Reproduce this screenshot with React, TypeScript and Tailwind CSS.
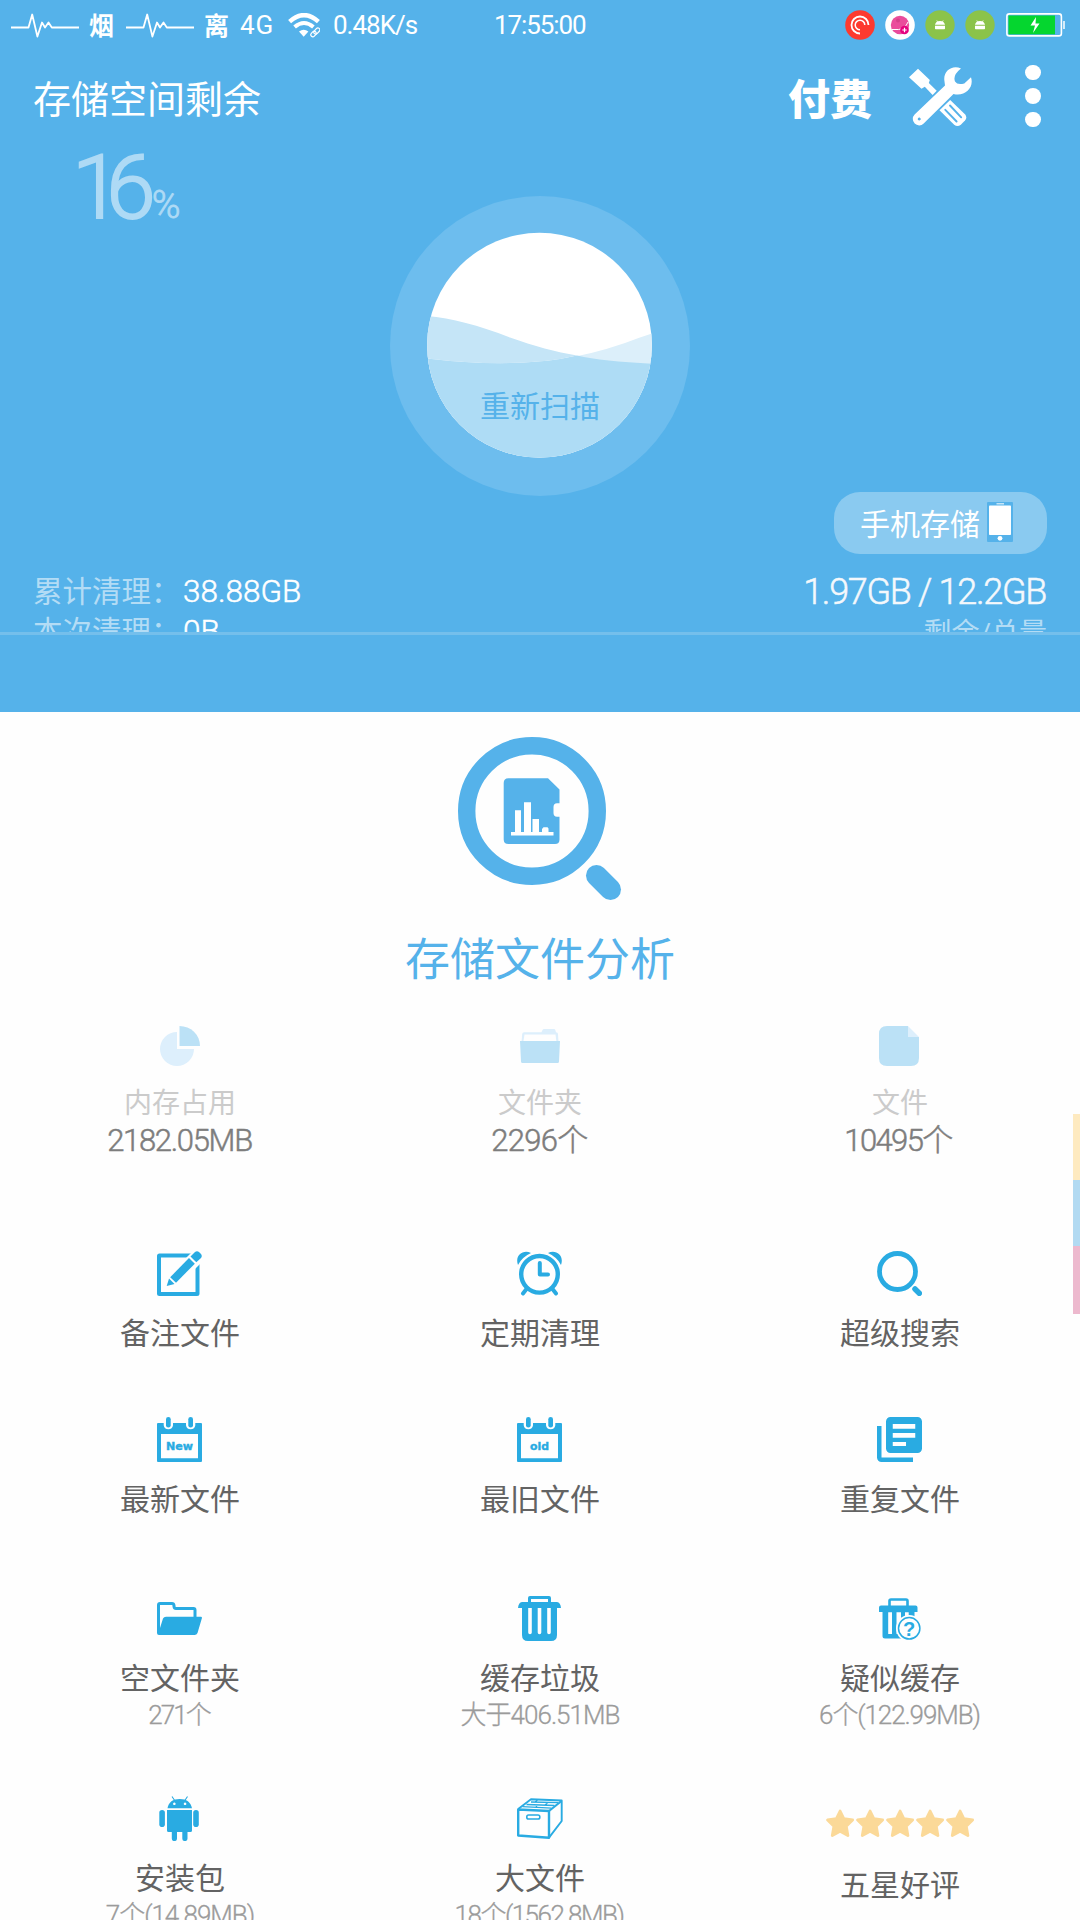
import type { ReactNode } from 'react';

type Tile = {
    icon: ReactNode;
    label: string;
    sub?: string;
    subClass?: string;
};

/* ---------- status bar ---------- */

function Pulse() {
    return (
        <svg width="68" height="25" viewBox="0 0 68 25" fill="none" stroke="#fff" strokeWidth="1.8" strokeLinejoin="round">
            <path d="M0 14.5H17.5L21.2 1.5L26.4 23.5L31 9.5L34 14.5L37.5 9.5L40.8 14.5H68" />
        </svg>
    );
}

function Wifi() {
    return (
        <svg width="32" height="25" viewBox="0 0 32 25" fill="none" stroke="#fff">
            <path d="M1.6 8.6Q16-4.4 30.4 8.6" strokeWidth="4.4" />
            <path d="M6.6 14Q16 6 25.4 14" strokeWidth="4" />
            <path d="M11 18.4Q15.7 15 20.4 18.4L15.7 23.8Z" fill="#fff" stroke="none" />
            <rect x="25.5" y="16" width="4" height="7" rx="2" transform="rotate(42 27.5 19.5) translate(0 -2)" strokeWidth="1.2" />
            <rect x="23.5" y="18" width="4" height="6" rx="2" transform="rotate(42 25.5 21)" strokeWidth="1.2" />
        </svg>
    );
}

function AndroidBadge() {
    return (
        <svg width="30" height="30" viewBox="0 0 30 30">
            <circle cx="15" cy="15" r="14.7" fill="#8bc34a" />
            <path d="M12.6 12L11.8 10.4M17.4 12L18.2 10.4" stroke="#fff" strokeWidth="0.7" />
            <path d="M10 14.7C10.6 12.4 12 11 15 11S19.4 12.4 20 14.7ZM10 15.7H20V18.5Q20 19.2 19.3 19.2H10.7Q10 19.2 10 18.5Z" fill="#fff" />
        </svg>
    );
}

function StatusBar() {
    return (
        <div className="flex h-[50px] items-center pl-[11px] text-[26px] leading-none text-white">
            <Pulse />
            <span className="mt-[2px] ml-[10px] w-[28px] text-[25px] font-bold">烟</span>
            <span className="ml-[9px]"><Pulse /></span>
            <span className="mt-[2px] ml-[10px] w-[28px] text-[25px] font-bold">离</span>
            <span className="ml-[8px] w-[48px] tracking-[0.8px]">4G</span>
            <Wifi />
            <span className="ml-[13px] w-[161px] tracking-[-1px]">0.48K/s</span>
            <span className="w-[351px] tracking-[-1.1px]">17:55:00</span>
            <div className="flex items-center gap-[10px]">
                <svg width="30" height="30" viewBox="0 0 30 30" fill="none">
                    <circle cx="15" cy="15" r="14.8" fill="#fd3a2f" />
                    <path d="M15 23.5A8.5 8.5 0 1 1 23.5 15" stroke="#fff" strokeWidth="1.8" />
                    <path d="M15 19.8A4.8 4.8 0 1 1 19.8 15" stroke="#fff" strokeWidth="1.5" />
                </svg>
                <svg width="30" height="30" viewBox="0 0 30 30">
                    <circle cx="15" cy="15" r="14.8" fill="#fff" />
                    <circle cx="15" cy="15" r="9.2" fill="#ea4c9c" />
                    <circle cx="13" cy="10.5" r="2" fill="#d6418b" />
                    <path d="M7 19.5H13.5Q20 19 23 12" stroke="#fff" strokeWidth="1" fill="none" />
                    <circle cx="19.5" cy="20" r="4.3" fill="#e6007e" />
                    <path d="M19.5 17.8V22.2M17.3 20H21.7" stroke="#fff" strokeWidth="1.2" />
                </svg>
                <AndroidBadge />
                <AndroidBadge />
            </div>
            <svg className="ml-[11px]" width="60" height="24" viewBox="0 0 60 24">
                <rect x="0.9" y="0.9" width="54.5" height="22" rx="2.5" fill="none" stroke="#fff" strokeWidth="1.6" />
                <rect x="2.5" y="2.5" width="46.5" height="18.8" fill="#05d62f" />
                <path d="M30 4L24.5 12.5H29L27 20L33.5 10.5H29.5Z" fill="#fff" />
                <path d="M58 8V16" stroke="#fff" strokeWidth="1.5" />
            </svg>
        </div>
    );
}

/* ---------- header ---------- */

function Tools() {
    return (
        <svg width="64" height="60" viewBox="0 0 64 60">
            <path d="M0 10.3L9 1.7L20.8 13L19.8 16L27.7 23.7L23.6 28L15.8 19.8L12.5 21.7Z" fill="#fff" />
            <path fillRule="evenodd" d="M52 1.4C43-2.5 34.5 4 35.3 13L36 18.5L5.6 47.6A6.3 6.3 0 1 0 14.7 56.5L44.5 27C55.5 30 65.5 21 62 10.2L55.3 16.4Q48.5 18.5 46 14.5Q43.5 8 52 1.4ZM10.3 50.6A1.5 1.5 0 1 1 10.2 50.6Z" fill="#fff" />
            <path d="M41.2 33L56.2 47.5Q58.5 50.5 56 53.5L51.8 57.8Q48.5 60.3 45.2 57.8L30.5 43.3Z" fill="#fff" />
            <path d="M41 38.5L52.2 50.3M36.3 42.8L47.6 54.5" stroke="#55b2ea" strokeWidth="1.9" strokeLinecap="round" />
        </svg>
    );
}

function Gauge() {
    return (
        <svg width="300" height="300" viewBox="390 196 300 300">
            <defs>
                <clipPath id="tank"><circle cx="539.5" cy="345.2" r="112.4" /></clipPath>
            </defs>
            <circle cx="540" cy="346" r="150" fill="#6dbdee" />
            <g clipPath="url(#tank)">
                <rect x="420" y="230" width="240" height="240" fill="#fff" />
                <path d="M420 357.5Q500 368 560 359Q590 355 625 343Q640 337 660 331V470H420Z" fill="#dceffa" />
                <path d="M420 357.5Q500 368 560 359L577 355.5Q605 362 660 364V470H420Z" fill="#aedcf5" />
                <path d="M420 315.5C447 317 475 324 510 337.5C534 346 556 352 577 355.5L560 359Q500 368 420 357.5Z" fill="#c5e5f7" />
            </g>
        </svg>
    );
}

function Header() {
    return (
        <header className="h-[712px] bg-[#55b2ea] text-white">
            <StatusBar />
            <div className="flex h-[98px] items-center pl-[33px]">
                <h1 className="mt-[2px] w-[755px] text-[38px] leading-none">存储空间剩余</h1>
                <span className="mt-[4px] w-[121px] text-[42px] leading-none font-black">付费</span>
                <div className="-mt-[4px]"><Tools /></div>
                <div className="-mt-[6px] ml-[52px] flex flex-col gap-[8px]">
                    <span className="size-[15.5px] rounded-full bg-white" />
                    <span className="size-[15.5px] rounded-full bg-white" />
                    <span className="size-[15.5px] rounded-full bg-white" />
                </div>
            </div>

            <div className="flex h-[344px]">
                <div className="flex h-[80px] w-[390px] items-baseline pt-[2px] pl-[72px] font-light text-[#aedaf5]">
                    <span className="text-[89px] leading-[76px] tracking-[-15px] [-webkit-text-stroke:2px]">16</span>
                    <span className="ml-[11px] text-[39px] leading-none [-webkit-text-stroke:0.8px]">%</span>
                </div>
                <div className="relative mt-[48px] size-[300px]">
                    <Gauge />
                    <span className="absolute inset-x-0 top-[196px] text-center text-[30px] leading-[30px] text-[#55b2ea]">重新扫描</span>
                </div>
            </div>

            <div className="flex justify-end pr-[33px]">
                <button className="flex h-[62px] w-[213px] items-center gap-[7px] rounded-[26px] bg-[#8acaf0] pl-[26px] text-[30px] leading-none">
                    <span className="mt-[3px]">手机存储</span>
                    <svg className="-mt-[2px]" width="26" height="40" viewBox="0 0 26 40">
                        <rect width="26" height="40" rx="1" fill="#55b2ea" />
                        <rect x="9.5" y="1" width="7.5" height="1.5" fill="#c5e5f7" />
                        <rect x="2" y="3.5" width="22" height="29.5" rx="0.8" fill="#fff" />
                        <circle cx="13" cy="36.3" r="2.4" fill="#fff" />
                    </svg>
                </button>
            </div>

            <div className="flex h-[78px] justify-between overflow-hidden pt-[18px] pr-[33px] pl-[33px]">
                <div className="flex flex-col text-[29.5px] leading-[40px]">
                    <p className="flex"><span className="w-[150px] text-[#b3dcf5]">累计清理：</span><span className="text-[31.5px] font-light [-webkit-text-stroke:0.5px]">38.88GB</span></p>
                    <p className="flex"><span className="w-[150px] text-[#b3dcf5]">本次清理：</span><span className="text-[31.5px] font-light [-webkit-text-stroke:0.5px]">0B</span></p>
                </div>
                <div className="flex flex-col items-end text-[#f4f8fc]">
                    <p className="pr-px text-[36px] leading-[41px] font-light tracking-[-1.3px] [-webkit-text-stroke:0.5px]">1.97GB / 12.2GB</p>
                    <p className="text-[28px] leading-[41px] text-[#b3dcf5]">剩余/总量</p>
                </div>
            </div>
            <div className="h-[3px] bg-[#74bfec]" />
        </header>
    );
}

/* ---------- analysis ---------- */

function AnalysisIcon() {
    return (
        <svg width="164" height="164" viewBox="0 0 164 164">
            <circle cx="74" cy="74" r="65.3" fill="none" stroke="#55b2ea" strokeWidth="17.4" />
            <path d="M50.5 41.3H90L101.5 52.5V66.3H99Q95.5 66.5 95.5 70V76Q95.5 79.5 99 79.7H101.5V102.5Q101.5 107 97 107H50.5Q45.7 107 45.7 102.5V46Q45.7 41.3 50.5 41.3Z" fill="#55b2ea" />
            <path d="M57 73.3H63V95H66V65.3H73V95H74.5V82H81V95H84V92L85.5 90.3H89.5L90.5 91.5V95H95.5V98.5H53V95H57Z" fill="#fff" />
            <path d="M138.5 138.5L152.5 152.5" stroke="#55b2ea" strokeWidth="21" strokeLinecap="round" />
        </svg>
    );
}

const stats = [
    {
        label: '内存占用',
        value: '2182.05MB',
        valueClass: 'tracking-[-1.3px] pr-[1px]',
        icon: (
            <svg width="40" height="40" viewBox="0 0 40 40">
                <path d="M17 6V23H34A17 17 0 1 1 17 6Z" fill="#ddeffc" />
                <path d="M19.5 0A20.5 20 0 0 1 40 20H19.5Z" fill="#bbe1f6" />
            </svg>
        ),
    },
    {
        label: '文件夹',
        value: '2296个',
        valueClass: 'tracking-[-0.7px] pr-[1px]',
        icon: (
            <svg width="40" height="40" viewBox="0 0 40 40">
                <path d="M1.5 16L2.2 8Q2.3 6.2 4 6.2H21.5L22.5 4Q23 3 24 3H34Q35 3 35.3 4L36 6.2Q38 6.5 38 8L38.5 16Z" fill="#ddeffc" />
                <path d="M4.5 8.5H35.5L36.3 15H3.5Z" fill="#fefefe" />
                <path d="M0 15H40L39 35.5Q39 37 37.5 37H2.5Q1 37 1 35.5Z" fill="#bbe1f6" />
            </svg>
        ),
    },
    {
        label: '文件',
        value: '10495个',
        valueClass: 'tracking-[-1.6px] pr-[4px]',
        icon: (
            <svg className="mr-[2px]" width="40" height="40" viewBox="0 0 40 40">
                <path d="M8 0H29V11H40V32Q40 40 32 40H8Q0 40 0 32V8Q0 0 8 0Z" fill="#bbe1f6" />
                <path d="M29 0L40 11H29Z" fill="#ddeffc" />
            </svg>
        ),
    },
];

/* ---------- tool icons ---------- */

function EditIcon() {
    return (
        <svg width="45" height="45" viewBox="0 0 45 45">
            <rect x="2" y="4.5" width="38.5" height="38.5" rx="0.5" fill="none" stroke="#29abe2" strokeWidth="4" />
            <path d="M8 37L12 24L35 1H45V11L22 34Z" fill="#fefefe" />
            <path d="M9.7 35L12 27.5L17.5 33Z" fill="#29abe2" />
            <path d="M13.2 26.2L32 7L37.8 12.7L19 31.7Z" fill="#29abe2" />
            <path d="M33.5 5.5L38 1Q40-.5 42 1L44 3Q45.5 5 44 7L39.3 11.3Z" fill="#29abe2" />
        </svg>
    );
}

function AlarmIcon() {
    return (
        <svg width="45" height="45" viewBox="0 0 45 45" fill="none" stroke="#29abe2" strokeLinecap="round" strokeLinejoin="round">
            <path d="M1 14C-2.5 4.5 6-2 14 2Q5 6 1 14ZM44 14C47.5 4.5 39-2 31 2Q40 6 44 14Z" fill="#29abe2" stroke="none" />
            <path d="M9.5 38L6 42.5M35.5 38L39 42.5" strokeWidth="4" />
            <circle cx="22.5" cy="23.3" r="18.3" strokeWidth="4.4" />
            <path d="M22.8 12V23.5H31" strokeWidth="4" />
        </svg>
    );
}

function SearchIcon() {
    return (
        <svg width="45" height="45" viewBox="0 0 45 45" fill="none" stroke="#29abe2" strokeLinecap="round">
            <circle cx="20.5" cy="20.5" r="18" strokeWidth="4.8" />
            <path d="M38 38L42.3 42.3" strokeWidth="5.5" />
        </svg>
    );
}

function CalendarIcon({ text, width }: { text: string; width: number }) {
    return (
        <svg width="45" height="45" viewBox="0 0 45 45">
            <path fillRule="evenodd" d="M1 6H6.7V8.2A4.7 4.7 0 0 0 16 8.2V6H29V8.2A4.7 4.7 0 0 0 38.3 8.2V6H44Q45 6 45 7V44Q45 45 44 45H1Q0 45 0 44V7Q0 6 1 6ZM4 17V41.3H41V17Z" fill="#29abe2" />
            <rect x="9" y="0" width="4.7" height="10.5" rx="2.3" fill="#29abe2" />
            <rect x="31.3" y="0" width="4.7" height="10.5" rx="2.3" fill="#29abe2" />
            <text
                x="22.5"
                y="33"
                textAnchor="middle"
                textLength={width}
                lengthAdjust="spacingAndGlyphs"
                stroke="#29abe2"
                strokeWidth="0.4"
                className="fill-[#29abe2] font-['DejaVu_Sans',sans-serif] text-[11px] font-bold"
            >
                {text}
            </text>
        </svg>
    );
}

function DuplicateIcon() {
    return (
        <svg width="45" height="45" viewBox="2 2 20 20" fill="#29abe2">
            <path d="M4 6H2v14c0 1.1.9 2 2 2h14v-2H4V6zm16-4H8c-1.1 0-2 .9-2 2v12c0 1.1.9 2 2 2h12c1.1 0 2-.9 2-2V4c0-1.1-.9-2-2-2zm-1 5.2H9V5.1h10v2.1zm0 4H9V9.1h10v2.1zm-4.1 3.7H9V13.1h5.9v1.8z" />
        </svg>
    );
}

function FolderOpenIcon() {
    return (
        <svg width="45" height="45" viewBox="0 -6 45 45">
            <path d="M1.5 30V3Q1.5 1.5 3 1.5H15Q16.7 1.5 17 3.5V4.5Q17.3 6.5 19 6.5H36.5Q38 6.5 38 8V16" fill="none" stroke="#29abe2" strokeWidth="3" />
            <path d="M9 14.7H44Q45.3 14.7 44.8 16.5L40.5 31Q39.7 33 37.5 33H2Q0 33 0 31V26H3L6 16.5Q6.8 14.7 9 14.7Z" fill="#29abe2" />
        </svg>
    );
}

function TrashIcon() {
    return (
        <svg width="43" height="45" viewBox="0 0 43 45">
            <path d="M11.5 7V2Q11.5 1.5 12 1.5H31Q31.5 1.5 31.5 2V7" fill="none" stroke="#29abe2" strokeWidth="3" />
            <path d="M4 6H39Q42.5 6.5 43 12H39V39Q39 45 33 45H10Q4 45 4 39V12H0Q.5 6.5 4 6Z" fill="#29abe2" />
            <path d="M10.2 12H13.8V36.5A1.8 1.8 0 0 1 10.2 36.5ZM19.7 12H23.3V36.5A1.8 1.8 0 0 1 19.7 36.5ZM29.2 12H32.8V36.5A1.8 1.8 0 0 1 29.2 36.5Z" fill="#fefefe" />
        </svg>
    );
}

function SuspectTrashIcon() {
    return (
        <svg className="ml-[3px]" width="44" height="42" viewBox="0 0 44 42">
            <path d="M10.5 8V3Q10.5 1.5 12 1.5H27Q28.5 1.5 28.5 3V8" fill="none" stroke="#29abe2" strokeWidth="2.6" />
            <path d="M2 7.5H36.5Q38.5 7.5 38.5 9.5V14H35.5V38Q35.5 40.5 33 40.5H6Q3.5 40.5 3.5 38V14H0V9.5Q0 7.5 2 7.5Z" fill="#29abe2" />
            <path d="M9.2 14.2H13V36H9.2ZM17.5 14.2H22V36H17.5ZM26 14.2H29.7V36H26Z" fill="#fefefe" />
            <circle cx="30.2" cy="30.3" r="13.2" fill="#fefefe" />
            <circle cx="30.2" cy="30.3" r="10.7" fill="#fefefe" stroke="#29abe2" strokeWidth="1.5" />
            <text x="30.2" y="37.5" textAnchor="middle" className="fill-[#29abe2] font-['Liberation_Sans',sans-serif] text-[20px] font-bold">?</text>
        </svg>
    );
}

function AndroidIcon() {
    return (
        <svg className="mr-[1px]" width="40" height="45" viewBox="0 0 40 45" fill="#29abe2">
            <path d="M13 .5L16 5M28.5 .5L25.5 5" stroke="#29abe2" strokeWidth="1.1" />
            <path fillRule="evenodd" d="M8.5 12.3C9.5 6 14 2.9 20.7 2.9S32 6 33 12.3ZM15.3 6.5A1.3 1.3 0 1 0 15.4 6.5ZM26 6.5A1.3 1.3 0 1 0 26.1 6.5Z" />
            <path d="M8 14H33V34.5Q33 36 31.5 36H28.5V42.5A2.6 2.6 0 0 1 23.3 42.5V36H18V42.5A2.6 2.6 0 0 1 12.8 42.5V36H9.5Q8 36 8 34.5Z" />
            <rect x="0.3" y="14" width="5.6" height="17" rx="2.8" />
            <rect x="34.2" y="14" width="5.6" height="17" rx="2.8" />
        </svg>
    );
}

function BoxIcon() {
    return (
        <svg width="46" height="42" viewBox="0 0 46 42" fill="none" stroke="#29abe2" strokeLinejoin="round">
            <path d="M1.2 11.5L32 13V39.7L1.2 37.5Z" strokeWidth="2.4" />
            <path d="M1.2 11L14 1.3L44.7 2.5V23L32 39.7" strokeWidth="1.9" />
            <path d="M32 13L44.5 3" strokeWidth="2.2" />
            <path d="M5.5 8.7L34.5 10.2M9.5 6.5L37.5 7.5M14 4L41 4.7M19 9L20.5 6.8M28 7L31 4.5M18 4.2L20.5 1.7" strokeWidth="1.3" />
            <rect x="9.8" y="17" width="13" height="4" rx="1.8" strokeWidth="1.6" />
        </svg>
    );
}

function Stars() {
    return (
        <div className="flex gap-[2px]">
            {[0, 1, 2, 3, 4].map((i) => (
                <svg key={i} width="28.2" height="29" viewBox="0 0 28 29">
                    <path
                        d="M14 2L17.7 9.6L26.5 11L20.2 17.2L21.8 26.5L14 22.3L6.2 26.5L7.8 17.2L1.5 11L10.3 9.6Z"
                        fill="#fbd998"
                        stroke="#fbd998"
                        strokeWidth="2.8"
                        strokeLinejoin="round"
                    />
                </svg>
            ))}
        </div>
    );
}

const rows: { height: string; tiles: Tile[] }[] = [
    {
        height: 'h-[166px]',
        tiles: [
            { icon: <EditIcon />, label: '备注文件' },
            { icon: <AlarmIcon />, label: '定期清理' },
            { icon: <SearchIcon />, label: '超级搜索' },
        ],
    },
    {
        height: 'h-[179px]',
        tiles: [
            { icon: <CalendarIcon text="New" width={27} />, label: '最新文件' },
            { icon: <CalendarIcon text="old" width={19} />, label: '最旧文件' },
            { icon: <DuplicateIcon />, label: '重复文件' },
        ],
    },
    {
        height: 'h-[200px]',
        tiles: [
            { icon: <FolderOpenIcon />, label: '空文件夹', sub: '271个', subClass: 'tracking-[-1.9px] pr-[2px]' },
            { icon: <TrashIcon />, label: '缓存垃圾', sub: '大于406.51MB', subClass: 'tracking-[-1px]' },
            { icon: <SuspectTrashIcon />, label: '疑似缓存', sub: '6个(122.99MB)', subClass: 'tracking-[-1.1px] pr-[1px]' },
        ],
    },
    {
        height: 'h-[200px]',
        tiles: [
            { icon: <AndroidIcon />, label: '安装包', sub: '7个(14.89MB)', subClass: 'tracking-[-1px]' },
            { icon: <BoxIcon />, label: '大文件', sub: '18个(1562.8MB)', subClass: 'tracking-[-1.5px] pr-[2px]' },
        ],
    },
];

function ToolTile({ tile }: { tile: Tile }) {
    return (
        <div className="flex flex-col items-center">
            <div className="flex h-[45px] items-center pr-[1px]">{tile.icon}</div>
            <p className="mt-[20px] text-[30px] leading-[36px] text-[#636363]">{tile.label}</p>
            {tile.sub && (
                <p className={`mt-[2px] text-[26px] leading-[32px] font-light text-[#9b9b9b] [-webkit-text-stroke:0.3px] ${tile.subClass}`}>{tile.sub}</p>
            )}
        </div>
    );
}

export default function App() {
    return (
        <div className="relative h-[1920px] w-[1080px] overflow-hidden bg-[#fefefe] font-['Roboto','Noto_Sans_CJK_SC',sans-serif]">
            <Header />

            <section className="flex h-[314px] flex-col items-center pt-[25px]">
                <AnalysisIcon />
                <h2 className="mt-[37px] text-[45px] leading-[45px] text-[#55b2ea]">存储文件分析</h2>
            </section>

            <section className="grid h-[225px] grid-cols-3">
                {stats.map((s) => (
                    <div key={s.label} className="flex flex-col items-center">
                        {s.icon}
                        <p className="mt-[20px] text-[28px] leading-[36px] text-[#cbcbcb]">{s.label}</p>
                        <p className={`text-[31px] leading-[37px] font-light text-[#7d7d7d] [-webkit-text-stroke:0.5px] ${s.valueClass}`}>{s.value}</p>
                    </div>
                ))}
            </section>

            {rows.map((row, i) => (
                <section key={i} className={`grid grid-cols-3 ${row.height}`}>
                    {row.tiles.map((tile) => (
                        <ToolTile key={tile.label} tile={tile} />
                    ))}
                    {i === rows.length - 1 && (
                        <div className="flex flex-col items-center pt-[13px]">
                            <Stars />
                            <p className="mt-[30px] text-[30px] leading-[36px] text-[#636363]">五星好评</p>
                        </div>
                    )}
                </section>
            ))}

            {/* edge shortcut strip */}
            <div className="absolute top-[1114px] right-0 flex w-[7px] flex-col">
                <span className="h-[66px] bg-[#feeac0]" />
                <span className="h-[66px] bg-[#b2daf2]" />
                <span className="h-[68px] bg-[#edb9ce]" />
            </div>
        </div>
    );
}
